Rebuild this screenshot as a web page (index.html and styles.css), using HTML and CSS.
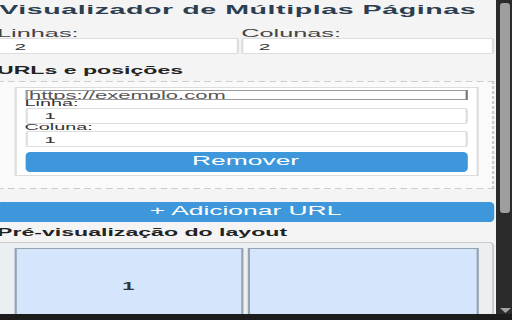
FILE: index.html
```html
<!DOCTYPE html>
<html lang="pt">
<head>
<meta charset="utf-8">
<title>Visualizador de Múltiplas Páginas</title>
<link rel="stylesheet" href="styles.css">
</head>
<body>
<div class="window">
  <div class="viewport">
    <div class="content">
      <div class="page">
        <h1 class="title">Visualizador de Múltiplas Páginas</h1>
        <div class="grid2">
          <div class="field">
            <label class="field-label">Linhas:</label>
            <input class="num-input" type="number" value="2">
          </div>
          <div class="field">
            <label class="field-label">Colunas:</label>
            <input class="num-input" type="number" value="2">
          </div>
        </div>
        <h2 class="section-title">URLs e posições</h2>
        <div class="url-list">
          <div class="url-card">
            <input class="url-input" type="url" placeholder="https://exemplo.com">
            <label class="small-label">Linha:</label>
            <input class="num-input card-input" type="number" value="1">
            <label class="small-label">Coluna:</label>
            <input class="num-input card-input" type="number" value="1">
            <button class="btn btn-remove">Remover</button>
          </div>
        </div>
        <button class="btn btn-add">+ Adicionar URL</button>
        <h2 class="section-title section-preview">Pré-visualização do layout</h2>
        <div class="preview">
          <div class="cell">1</div>
          <div class="cell"></div>
          <div class="cell"></div>
          <div class="cell"></div>
        </div>
      </div>
    </div>
    <div class="scrollbar">
      <div class="thumb"></div>
      <svg class="arrow" width="11" height="5" viewBox="0 0 11 5"><path d="M0 0 L11 0 L5.5 5 Z" fill="#a3a3a3"/></svg>
    </div>
  </div>
  <div class="hbar"></div>
</div>
</body>
</html>
```
FILE: styles.css
```css
html, body {
  margin: 0;
  padding: 0;
}
body {
  width: 512px;
  height: 320px;
  overflow: hidden;
  background: #1c1c1c;
  font-family: "Liberation Sans", Arial, sans-serif;
}
.window {
  display: flex;
  flex-direction: column;
  width: 512px;
  height: 320px;
}
.viewport {
  display: flex;
  height: 314px;
}
.content {
  width: 496px;
  height: 314px;
  overflow: hidden;
  background: #f4f4f4;
}
.page {
  width: 226px;
  margin-left: -3px;
  transform: scaleX(2.2);
  transform-origin: 0 0;
}
.title {
  margin: 0 0 8px;
  padding-left: 1px;
  font-size: 13px;
  font-weight: bold;
  line-height: 20px;
  letter-spacing: 0.25px;
  color: #2c3e50;
  white-space: nowrap;
}
.grid2 {
  display: grid;
  grid-template-columns: 110px 1fr;
  column-gap: 1px;
}
.field-label {
  display: block;
  font-size: 11.5px;
  line-height: 10px;
  color: #444;
}
.num-input {
  display: block;
  width: 100%;
  box-sizing: border-box;
  height: 16px;
  margin: 0;
  padding: 0 7px;
  border: 1px solid #ddd;
  border-radius: 1px / 2px;
  background: #fff;
  font-family: "Liberation Sans", Arial, sans-serif;
  font-size: 9.5px;
  color: #333;
  outline: none;
  -moz-appearance: textfield;
}
.num-input::-webkit-inner-spin-button,
.num-input::-webkit-outer-spin-button {
  -webkit-appearance: none;
  margin: 0;
}
.section-title {
  margin: 10px 0 5px;
  font-size: 10.5px;
  font-weight: bold;
  line-height: 12px;
  color: #222;
  white-space: nowrap;
}
.url-list {
  border: 1px dashed #ccc;
  background: #fafafa;
  padding: 5px 6.5px 12px;
}
.url-card {
  display: flex;
  flex-direction: column;
  background: #fff;
  border: 1px solid #ddd;
  padding: 2px 4px 3px;
}
.url-input {
  display: block;
  width: 100%;
  box-sizing: border-box;
  height: 10px;
  margin: 0;
  padding: 0 1px;
  border: 1px solid #999;
  border-right-color: #777;
  background: #fff;
  font-family: "Liberation Sans", Arial, sans-serif;
  font-size: 10px;
  line-height: 8px;
  color: #333;
  outline: none;
}
.url-input::placeholder {
  color: #555;
}
.small-label {
  display: block;
  font-size: 9px;
  line-height: 7.5px;
  color: #333;
}
.card-input {
  padding: 0 8px;
}
.btn {
  display: block;
  width: 100%;
  height: 19.5px;
  margin: 0;
  padding: 0;
  border: 0;
  border-radius: 2px / 4px;
  background: #3e97da;
  color: #fff;
  font-family: "Liberation Sans", Arial, sans-serif;
  font-size: 12px;
  line-height: 19.5px;
  text-align: center;
  white-space: nowrap;
}
.btn-remove {
  margin-top: 5px;
}
.btn-add {
  margin-top: 13.5px;
}
.section-preview {
  margin: 4.5px 0 4px;
}
.preview {
  display: grid;
  grid-template-columns: 1fr 1fr;
  gap: 2px;
  border: 1px solid #ccc;
  border-radius: 2px / 4px;
  background: #eceff1;
  padding: 5px 6.5px;
}
.cell {
  display: flex;
  align-items: center;
  justify-content: center;
  height: 76px;
  box-sizing: border-box;
  border: 1px solid #98a2b0;
  background: #d4e5fc;
  font-size: 10px;
  font-weight: bold;
  color: #333;
}
.scrollbar {
  display: flex;
  flex-direction: column;
  width: 16px;
  box-sizing: border-box;
  padding-left: 4px;
  background: #2b2b2b;
}
.thumb {
  width: 10px;
  height: 210px;
  margin-top: 3px;
  border-radius: 3px;
  background: #9e9e9e;
}
.arrow {
  display: block;
  margin-top: auto;
  margin-bottom: 1px;
}
.hbar {
  height: 6px;
  background: #1c1c1c;
}
```
